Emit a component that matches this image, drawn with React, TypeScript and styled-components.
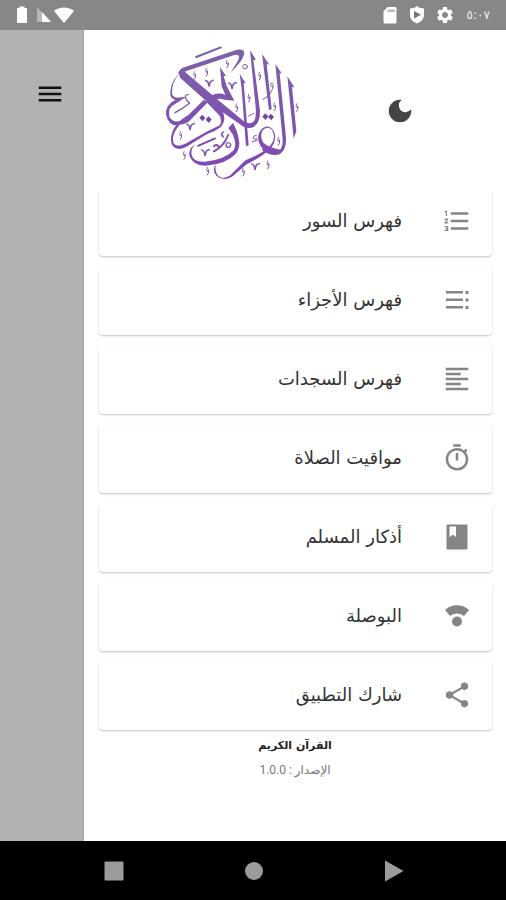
import React from "react";
import styled, { createGlobalStyle } from "styled-components";
import {
  MdDarkMode,
  MdFormatAlignLeft,
  MdFormatListNumbered,
  MdMenu,
  MdOutlineTimer,
  MdSettings,
  MdShare,
} from "react-icons/md";

const GlobalStyle = createGlobalStyle`
  *, *::before, *::after { box-sizing: border-box; }
  body {
    margin: 0;
    background: #fff;
    font-family: "DejaVu Sans", "Noto Sans", sans-serif;
  }
  button { font: inherit; color: inherit; border: 0; background: none; padding: 0; cursor: pointer; }
`;

const Screen = styled.div`
  display: flex;
  flex-direction: column;
  min-height: 100vh;
`;

const StatusBar = styled.header`
  display: flex;
  align-items: center;
  justify-content: space-between;
  height: 30px;
  padding: 0 16px;
  background: #878787;
  color: #fff;
`;

const StatusGroup = styled.div<{ $gap: number }>`
  display: flex;
  align-items: center;
  gap: ${(p) => p.$gap}px;
  svg { display: block; }
`;

const Clock = styled.time`
  font-size: 12px;
  line-height: 16px;
  color: #eee;
`;

const Body = styled.div`
  display: flex;
  flex: 1;
`;

const Scrim = styled.div`
  flex: 0 0 84px;
  padding: 49px 0 0 35px;
  background: #b2b2b2;
  border-right: 1px solid #a4a4a4;
`;

const IconButton = styled.button`
  display: flex;
  width: 30px;
  height: 30px;
  color: #444;
`;

const MenuButton = styled(IconButton)`
  color: #111;
`;

const Drawer = styled.aside`
  display: flex;
  flex-direction: column;
  flex: 1;
  min-width: 0;
  background: #fff;
`;

const DrawerHeader = styled.div`
  display: grid;
  grid-template-columns: 1fr 1fr;
  align-items: center;
  height: 162px;
  padding: 0 22px 0 64px;
`;

const HeaderCell = styled.div`
  display: flex;
  justify-content: center;
`;

const Menu = styled.nav`
  overflow: hidden;
  padding: 0 14px 4px 15px;
`;

const MenuList = styled.ul`
  display: flex;
  flex-direction: column;
  gap: 11px;
  margin: -4px 0 0;
  padding: 0;
  list-style: none;
`;

const MenuItem = styled.button`
  display: flex;
  align-items: center;
  gap: 40px;
  width: 100%;
  height: 68px;
  padding: 0 20px 2px;
  border-radius: 4px;
  background: #fff;
  box-shadow: 0 1px 2px rgba(0, 0, 0, 0.24);
  color: #333;
  font-size: 18px;
  line-height: 28px;
  svg { flex: none; color: #858585; }
`;

const About = styled.footer`
  display: flex;
  flex-direction: column;
  align-items: center;
  gap: 4px;
  padding: 2px 0 24px;
`;

const AppName = styled.strong`
  font-size: 11px;
  line-height: 20px;
  color: #222;
`;

const Version = styled.span`
  font-family: Roboto, "DejaVu Sans", sans-serif;
  font-size: 12px;
  line-height: 20px;
  color: #777;
`;

const NavBar = styled.div`
  display: grid;
  grid-template-columns: repeat(3, 1fr);
  align-items: center;
  height: 59px;
  padding: 0 42px 0 44px;
  background: #000;
`;

const NavButton = styled.button`
  display: flex;
  justify-content: center;
  color: #9b9b9b;
`;

const BatteryIcon = () => (
  <svg width="12" height="18" viewBox="0 0 12 18" fill="currentColor">
    <path d="M3.5 2V.5h5V2H10a1 1 0 0 1 1 1v13a1 1 0 0 1-1 1H2a1 1 0 0 1-1-1V3a1 1 0 0 1 1-1z" />
  </svg>
);

const SignalIcon = () => (
  <svg width="16" height="16" viewBox="0 0 16 16">
    <path d="M1 0L15 15H1z" fill="#fff" opacity=".4" />
    <path d="M6 5L15 15H6z" fill="#fff" />
  </svg>
);

const WifiIcon = () => (
  <svg width="20" height="16" viewBox="0 0 20 16" fill="currentColor">
    <path d="M0 4C5-.8 15-.8 20 4L10 16z" />
  </svg>
);

const SdIcon = () => (
  <svg width="14" height="17" viewBox="0 0 14 17">
    <path d="M4.5 0H12a1.5 1.5 0 0 1 1.500 1.500V15a1.500 1.500 0 0 1-1.500 1.500H2A1.500 1.500 0 0 1 .5 15V4.500z" fill="#fff" />
    <path d="M5 2.500h7V5H4z" fill="#bbb" />
  </svg>
);

const ShieldIcon = () => (
  <svg width="16" height="18" viewBox="0 0 16 18">
    <path d="M8 0c2 1.800 4.500 2.400 7 2.500V9c0 4-3 7-7 8.500C4 16 1 13 1 9V2.500C3.500 2.400 6 1.800 8 0z" fill="#fff" />
    <path d="M5 5l7 3.800L5 12.500z" fill="#777" />
  </svg>
);

const PartsIcon = ({ size = 30 }: { size?: number }) => (
  <svg width={size} height={size} viewBox="0 0 30 30" fill="currentColor">
    <path d="M4 6h17v2.500H4zM4 13.500h17v2.500H4zM4 21h17v2.500H4z" />
    <path d="M23.500 6h3v3h-3zM23.500 13.500h3v3h-3zM23.500 21h3v3h-3z" />
  </svg>
);

const BookIcon = ({ size = 30 }: { size?: number }) => (
  <svg width={size} height={size} viewBox="0 0 30 30" fill="currentColor">
    <path fillRule="evenodd" d="M5.500 2.500h19a1 1 0 0 1 1 1v23a1 1 0 0 1-1 1h-19a1 1 0 0 1-1-1v-23a1 1 0 0 1 1-1zM7.500 4.500v10.500l3.200-2.200 3.300 2.200V4.500z" />
  </svg>
);

const QiblaIcon = ({ size = 30 }: { size?: number }) => (
  <svg width={size} height={size} viewBox="0 0 30 30" fill="currentColor">
    <path d="M3 9C9 2.700 21 2.700 27 9L22 15C18 11.500 12 11.500 8 15z" />
    <circle cx="15" cy="20.500" r="5" />
  </svg>
);

const ticks = [
  [118, 118], [154, 108], [216, 84], [281, 186], [244, 215], [313, 120], [358, 212],
  [370, 315], [76, 298], [87, 358], [157, 405], [264, 408], [338, 386], [425, 214],
];

const chevrons = [
  [164, 140], [233, 147], [107, 270], [152, 348], [302, 390],
];

const dots = [
  [142, 246], [161, 251], [331, 242], [348, 243],
];

const Logo = () => (
  <svg width="155" height="150" viewBox="0 0 465 450" role="img" aria-label="القرآن الكريم">
    <defs>
      <linearGradient id="ink" x1="0" y1="0" x2="0" y2="1">
        <stop offset="0" stopColor="#8d6fb5" />
        <stop offset="1" stopColor="#7c45ab" />
      </linearGradient>
      <linearGradient id="body" gradientUnits="userSpaceOnUse" x1="0" y1="30" x2="0" y2="430">
        <stop offset="0" stopColor="#7c62a8" />
        <stop offset="1" stopColor="#8045b5" />
      </linearGradient>
    </defs>
    <g fill="url(#body)">
      <path d="M120 61L198 31L201 36L123 67z" />
      <path d="M70 110Q75 97 90 93L246 41Q272 37 267 56Q260 78 226 110Q246 82 252 67Q255 54 238 57L92 106L80 116z" />
      <path d="M70 108L84 103L176 181L268 257Q290 268 299 252Q304 242 302 214L285 42L303 72L295 71L315 224Q316 268 287 276Q270 278 255 265L151 193L76 126z" />
      <path d="M254 113L272 142L266 141L281 328L273 331L260 160z" />
      <path d="M321 54L343 86L335 84L350 219L342 223z" />
      <path d="M361 84L380 112L374 112L393 305Q394 355 360 357Q340 357 320 341L332 333Q360 348 374 342Q384 336 383 310z" />
      <path d="M397 121L418 154L411 153L424 286L416 307z" />
      <path d="M195 93L213 120L206 120L215 150L238 194L208 191Q190 185 168 193L158 184Q188 166 211 177L200 151z" />
      <path d="M75 112Q49 139 51 173Q54 184 68 185L94 182L50 211Q38 224 44 244Q54 263 84 253L146 192L160 197L101 257Q78 271 55 267Q31 254 33 224Q38 203 61 192Q43 185 46 167Q48 134 75 112z" />
      <path d="M107 233Q83 251 63 281Q49 305 56 322Q65 336 94 322L153 288L194 268Q202 256 194 239L155 199L167 192L202 226Q217 251 197 274Q180 287 155 295L97 331Q64 349 50 325Q43 299 59 274Q77 247 107 233z" />
      <path d="M122 324Q105 340 110 357Q116 380 151 377Q210 371 236 343Q246 326 234 297L220 276L234 261Q249 286 253 321Q253 342 241 355Q215 382 162 388Q117 394 104 361Q98 338 122 324z" />
      <path d="M183 383Q177 401 188 418Q202 434 226 418L271 373Q327 351 347 327Q365 306 351 282Q337 268 323 283Q313 301 325 320Q342 337 385 342L373 355Q334 353 318 332Q301 306 317 283Q333 265 348 276Q368 292 356 324Q343 351 275 385L231 422Q203 437 184 419Q170 401 183 383z" />
      <path d="M126 328L181 304L183 309L129 333z" />
    </g>
    <g fill="none" stroke="url(#ink)" strokeLinecap="round" strokeLinejoin="round">
      {ticks.map(([x, y]) => (
        <path key={`${x}-${y}`} d={`M${x} ${y - 11}q-4 10 0 12q4 1 4-5m0 3q1 8-4 13`} strokeWidth="3" />
      ))}
      {chevrons.map(([x, y]) => (
        <path key={`${x}-${y}`} d={`M${x - 12} ${y - 6}q8 1 10 16q3-17 13-17`} strokeWidth="5" />
      ))}
      <path d="M60 230Q82 219 104 201M103 200q-10-7-12-17q1-8 9-7" strokeWidth="4" />
      <path d="M177 346Q207 331 220 296M177 330q9-8 14 3M204 302q-8-9 1-14" strokeWidth="6" />
      <circle cx="270" cy="92" r="7" strokeWidth="3" />
      <circle cx="220" cy="327" r="7" strokeWidth="4" />
      <path d="M324 190Q351 177 355 147q-2-9-8-4q-2 11 8 10" strokeWidth="3" />
      <path d="M280 240l17-8M292 318l15-6m-3-13q-10-2-9 8q3 5 10 1" strokeWidth="3" />
    </g>
    <g fill="#7446a6">
      {dots.map(([x, y]) => (
        <path key={x} d={`M${x - 9} ${y}l8-10l10 9l-8 11z`} />
      ))}
    </g>
  </svg>
);

const items = [
  { label: "فهرس السور", Icon: MdFormatListNumbered },
  { label: "فهرس الأجزاء", Icon: PartsIcon },
  { label: "فهرس السجدات", Icon: MdFormatAlignLeft },
  { label: "مواقيت الصلاة", Icon: MdOutlineTimer },
  { label: "أذكار المسلم", Icon: BookIcon },
  { label: "البوصلة", Icon: QiblaIcon },
  { label: "شارك التطبيق", Icon: MdShare },
];

export default function App() {
  return (
    <Screen>
      <GlobalStyle />
      <StatusBar>
        <StatusGroup $gap={8}>
          <BatteryIcon />
          <StatusGroup $gap={2}>
            <SignalIcon />
            <WifiIcon />
          </StatusGroup>
        </StatusGroup>
        <StatusGroup $gap={12}>
          <SdIcon />
          <StatusGroup $gap={10}>
            <ShieldIcon />
            <MdSettings size={20} />
          </StatusGroup>
          <Clock>٥:٠٧</Clock>
        </StatusGroup>
      </StatusBar>
      <Body>
        <Scrim>
          <MenuButton aria-label="القائمة">
            <MdMenu size={30} />
          </MenuButton>
        </Scrim>
        <Drawer>
          <DrawerHeader>
            <HeaderCell>
              <Logo />
            </HeaderCell>
            <HeaderCell>
              <IconButton aria-label="الوضع الليلي">
                <MdDarkMode size={30} />
              </IconButton>
            </HeaderCell>
          </DrawerHeader>
          <Menu dir="rtl">
            <MenuList>
              {items.map(({ label, Icon }) => (
                <li key={label}>
                  <MenuItem>
                    <Icon size={30} />
                    {label}
                  </MenuItem>
                </li>
              ))}
            </MenuList>
          </Menu>
          <About dir="rtl">
            <AppName>القرآن الكريم</AppName>
            <Version>الإصدار : 1.0.0</Version>
          </About>
        </Drawer>
      </Body>
      <NavBar>
        <NavButton aria-label="التطبيقات الأخيرة">
          <svg width="20" height="20" viewBox="0 0 20 20" fill="currentColor">
            <rect width="19" height="19" x=".5" y=".5" rx="1" />
          </svg>
        </NavButton>
        <NavButton aria-label="الرئيسية">
          <svg width="20" height="20" viewBox="0 0 20 20" fill="currentColor">
            <circle cx="10" cy="10" r="9" />
          </svg>
        </NavButton>
        <NavButton aria-label="رجوع">
          <svg width="20" height="22" viewBox="0 0 20 22" fill="currentColor">
            <path d="M1 .5L19.500 11L1 21.500z" />
          </svg>
        </NavButton>
      </NavBar>
    </Screen>
  );
}
